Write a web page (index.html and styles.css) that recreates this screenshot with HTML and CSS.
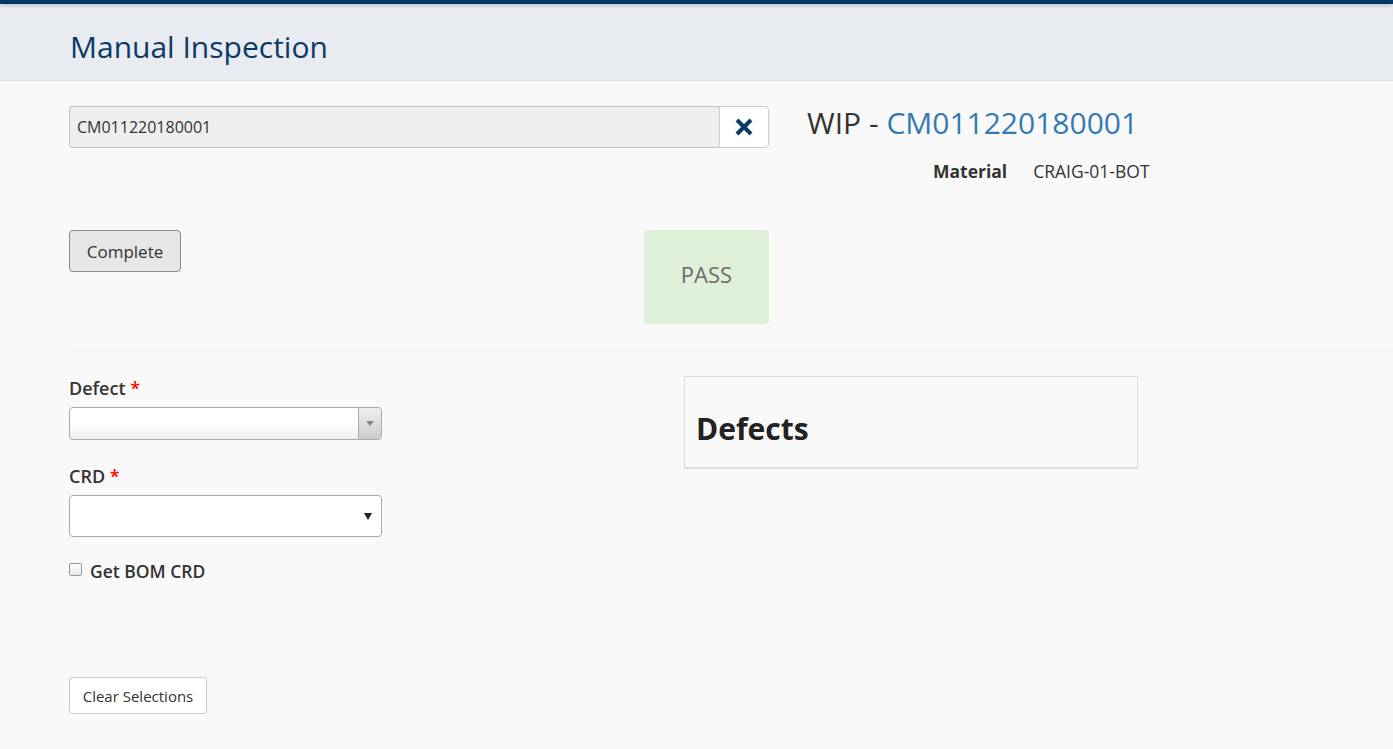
FILE: index.html
```html
<!DOCTYPE html>
<html>
<head>
<meta charset="utf-8">
<link rel="stylesheet" href="styles.css">
</head>
<body>
<div class="topline"></div>
<header class="header">
  <h1 class="title">Manual Inspection</h1>
</header>
<main class="main">
  <section class="row-top">
    <div class="scan">
      <div class="input-group">
        <input class="scan-input" type="text" value="CM011220180001" readonly>
        <button class="clear-btn" type="button" aria-label="Clear">
          <svg width="18" height="18" viewBox="0 0 18 18"><path d="M2 2 L16 16 M16 2 L2 16" stroke="#0b3a66" stroke-width="4" stroke-linecap="butt"/></svg>
        </button>
      </div>
    </div>
    <div class="wip">
      <div class="wip-title">WIP - <span class="wip-id">CM011220180001</span></div>
      <div class="wip-meta"><span class="meta-key">Material</span><span class="meta-val">CRAIG-01-BOT</span></div>
    </div>
  </section>
  <section class="row-actions">
    <button class="btn-complete" type="button">Complete</button>
    <div class="pass">PASS</div>
  </section>
  <hr class="divider">
  <section class="row-form">
    <div class="form-col">
      <div class="field">
        <label class="lbl">Defect <span class="req">*</span></label>
        <div class="select2"><span class="s2-arrow"><span class="tri-grey"></span></span></div>
      </div>
      <div class="field">
        <label class="lbl">CRD <span class="req">*</span></label>
        <div class="select-plain"><span class="tri-black"></span></div>
      </div>
      <label class="chk"><span class="box"></span>Get BOM CRD</label>
      <button class="btn-clear" type="button">Clear Selections</button>
    </div>
    <div class="panel">
      <h2 class="panel-title">Defects</h2>
    </div>
  </section>
</main>
</body>
</html>
```
FILE: styles.css
```css
* { box-sizing: border-box; }
html, body { margin: 0; padding: 0; }
body {
  background: #f9f9f9;
  font-family: "Open Sans", "Liberation Sans", sans-serif;
  color: #333;
  width: 1393px;
  height: 749px;
  overflow: hidden;
}
.topline {
  height: 4px;
  background: #003764;
  box-shadow: 0 1px 4px rgba(0,0,0,0.25);
  position: relative;
}
.header {
  height: 77px;
  background: #e8ebf0;
  border-bottom: 1px solid #dde1e6;
  padding-left: 70px;
  display: flex;
  align-items: center;
}
.title {
  margin: 0;
  font-weight: 400;
  font-size: 30px;
  color: #0b3a66;
  line-height: 1;
  padding-top: 10px;
}
.main { padding-left: 69px; }
.row-top {
  display: flex;
  padding-top: 25px;
}
.scan { width: 738px; }
.input-group { display: flex; width: 700px; height: 42px; }
.scan-input {
  flex: 1;
  height: 42px;
  border: 1px solid #c4c4c4;
  border-right: none;
  border-radius: 4px 0 0 4px;
  background: #eeeeee;
  font-family: inherit;
  font-size: 16px;
  color: #333;
  padding: 0 7px;
  outline: none;
}
.clear-btn {
  width: 50px;
  height: 42px;
  border: 1px solid #ccc;
  border-radius: 0 4px 4px 0;
  background: #fff;
  display: flex;
  align-items: center;
  justify-content: center;
  padding: 0;
}
.wip-title {
  font-size: 30px;
  line-height: 36px;
  color: #333;
  margin-top: -1px;
}
.wip-id { color: #337ab7; }
.wip-meta {
  margin-top: 18px;
  padding-left: 126px;
  font-size: 17.5px;
  line-height: 24px;
  display: flex;
  gap: 26px;
}
.meta-key { font-weight: 700; }
.row-actions {
  display: flex;
  align-items: flex-start;
  margin-top: 47px;
}
.btn-complete {
  width: 112px;
  height: 42px;
  background: #e6e6e6;
  border: 1px solid #8c8c8c;
  border-radius: 4px;
  font-family: inherit;
  font-size: 17px;
  color: #333;
  padding: 0;
}
.pass {
  margin-left: 463px;
  width: 125px;
  height: 94px;
  background: #dff0d8;
  border-radius: 4px;
  display: flex;
  align-items: center;
  justify-content: center;
  font-size: 22px;
  color: #6b6b6b;
  padding-bottom: 6px;
}
.divider {
  margin: 26px 0 0 0;
  border: 0;
  border-top: 1px solid #eaeaea;
}
.row-form {
  display: flex;
  align-items: flex-start;
}
.form-col { width: 615px; padding-top: 25px; }
.field { margin-bottom: 24px; }
.lbl {
  display: block;
  font-size: 18px;
  font-weight: 600;
  line-height: 24px;
  margin-bottom: 7px;
  color: #333;
}
.req { color: #ff0000; }
.select2 {
  width: 313px;
  height: 33px;
  border: 1px solid #aaa;
  border-radius: 4px;
  background: linear-gradient(#ffffff 50%, #eeeeee 100%);
  display: flex;
  justify-content: flex-end;
}
.s2-arrow {
  width: 23px;
  height: 31px;
  border-left: 1px solid #aaa;
  background: linear-gradient(#eeeeee, #cccccc);
  border-radius: 0 4px 4px 0;
  display: flex;
  align-items: center;
  justify-content: center;
}
.tri-grey {
  width: 0; height: 0;
  border-left: 4px solid transparent;
  border-right: 4px solid transparent;
  border-top: 5px solid #888;
}
.select-plain {
  width: 313px;
  height: 42px;
  border: 1px solid #aaa;
  border-radius: 4px;
  background: #fff;
  display: flex;
  align-items: center;
  justify-content: flex-end;
  padding-right: 9px;
}
.tri-black {
  width: 0; height: 0;
  border-left: 4px solid transparent;
  border-right: 4px solid transparent;
  border-top: 7px solid #222;
}
.chk {
  display: flex;
  align-items: center;
  font-size: 17.5px;
  font-weight: 600;
  line-height: 24px;
  margin-top: -2px;
}
.box {
  width: 13px;
  height: 13px;
  border: 1px solid #999;
  border-radius: 2px;
  background: linear-gradient(#fff, #e8e8e8);
  margin-right: 8px;
  margin-top: -4px;
}
.btn-clear {
  margin-top: 94px;
  width: 138px;
  height: 37px;
  background: #fff;
  border: 1px solid #ccc;
  border-radius: 3px;
  font-family: inherit;
  font-size: 15px;
  color: #333;
  padding: 0;
}
.panel {
  margin-top: 25px;
  width: 454px;
  height: 93px;
  border: 1px solid #ddd;
  border-bottom: 2px solid #ddd;
  padding: 32px 11px 0;
}
.panel-title {
  margin: 0;
  font-size: 30px;
  font-weight: 700;
  line-height: 40px;
  color: #222;
}
```
